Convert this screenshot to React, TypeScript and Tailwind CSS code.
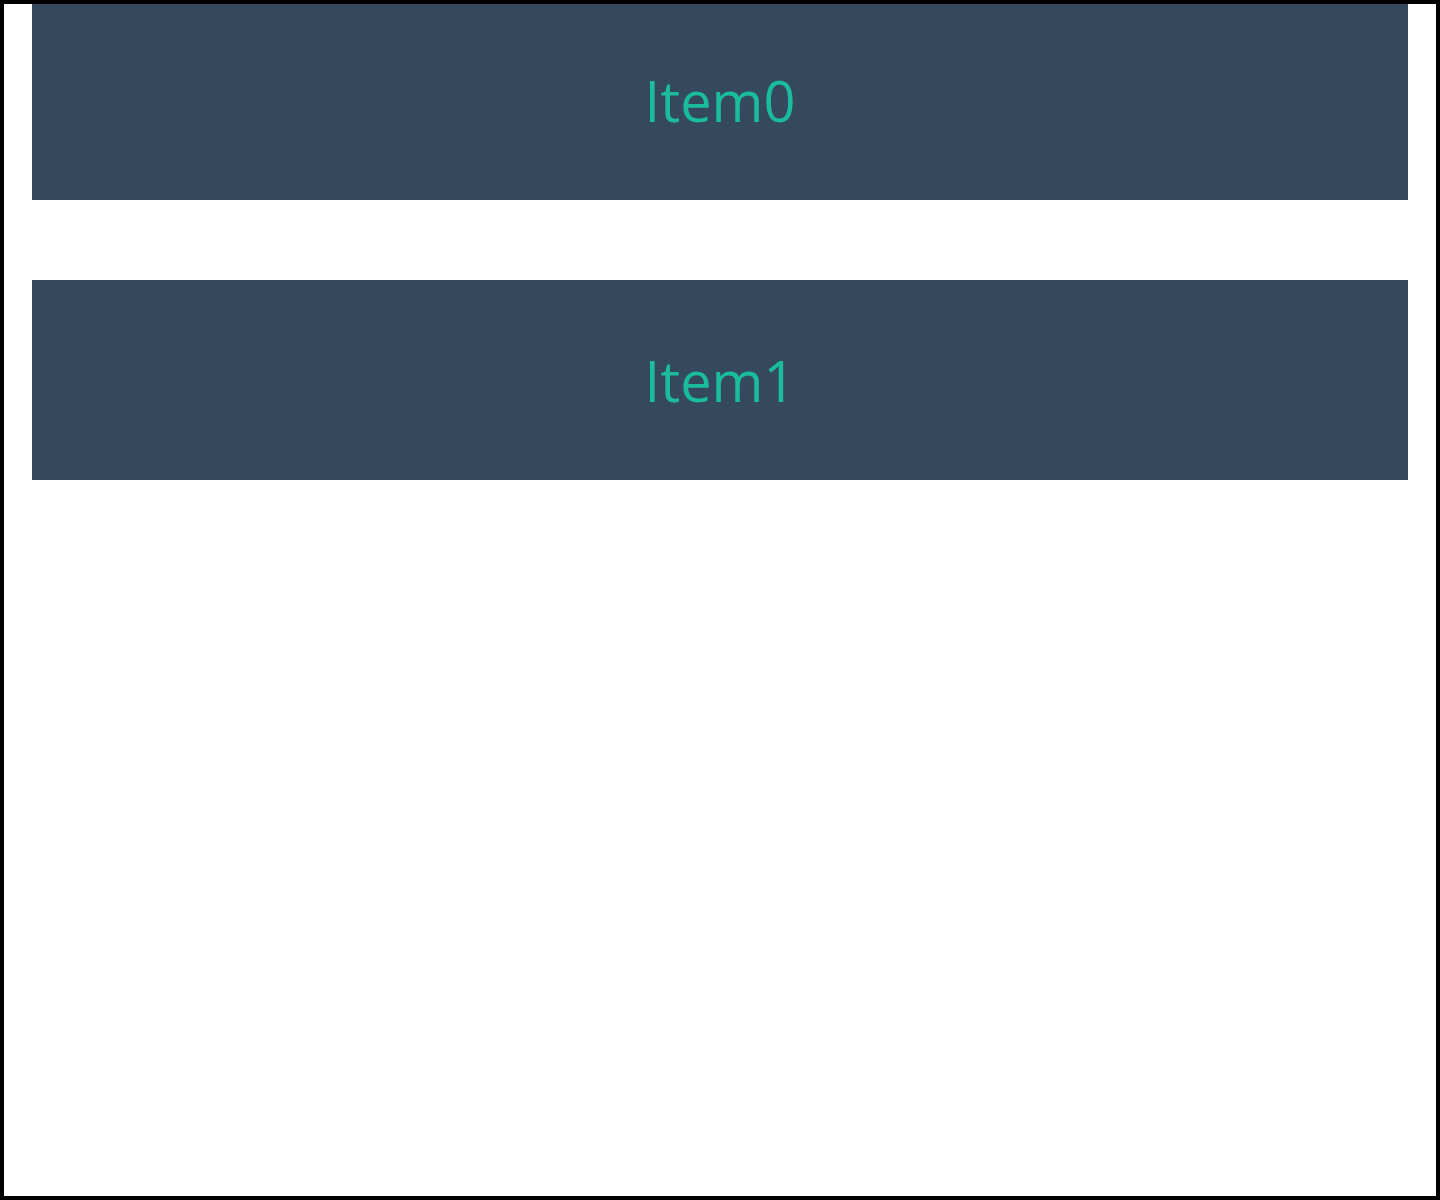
const items = ['Item0', 'Item1']

export default function App() {
  return (
    <div className="relative h-[1200px] w-full bg-white" style={{ fontFamily: '"Open Sans", sans-serif' }}>
      <div className="flex flex-col gap-20 px-8">
        {items.map((item) => (
          <div
            key={item}
            className="flex h-[200px] items-center justify-center bg-[#34495e] text-[56px] font-medium text-[#1abc9c]"
          >
            {item}
          </div>
        ))}
      </div>
      <div className="pointer-events-none absolute inset-0 border-4 border-black" />
    </div>
  )
}
